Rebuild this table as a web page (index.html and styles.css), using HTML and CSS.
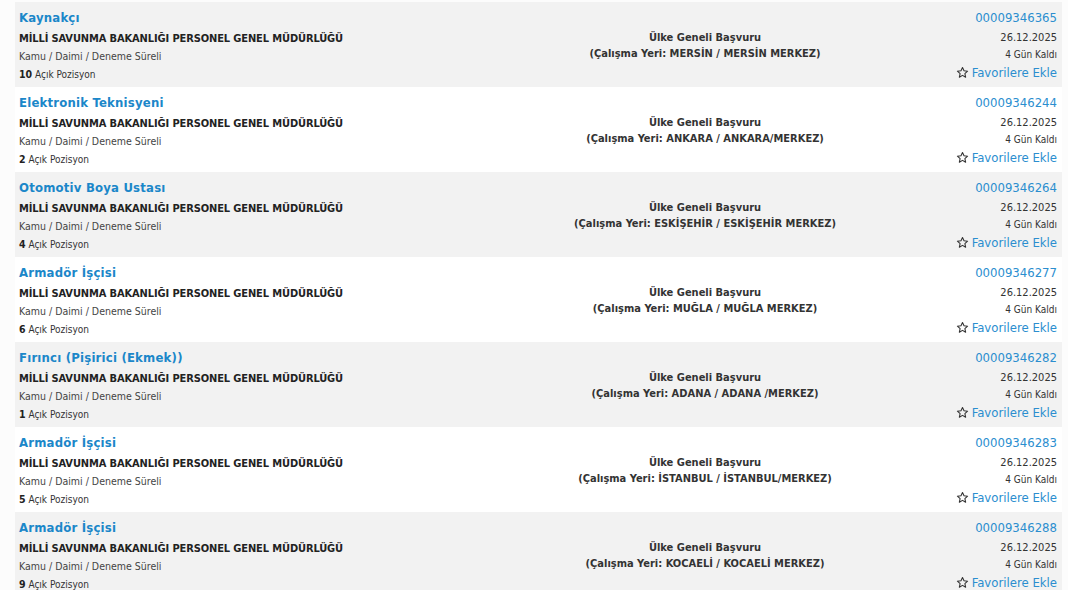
FILE: index.html
```html
<!DOCTYPE html>
<html lang="tr">
<head>
<meta charset="utf-8">
<link rel="stylesheet" href="styles.css">
</head>
<body>
<div class="list">
  <div class="row alt">
    <div class="col-left">
      <a class="title">Kaynakçı</a>
      <div class="org">MİLLİ SAVUNMA BAKANLIĞI PERSONEL GENEL MÜDÜRLÜĞÜ</div>
      <div class="type">Kamu / Daimi / Deneme Süreli</div>
      <div class="pos"><b>10</b> Açık Pozisyon</div>
    </div>
    <div class="col-mid">
      <div>Ülke Geneli Başvuru</div>
      <div>(Çalışma Yeri: MERSİN / MERSİN MERKEZ)</div>
    </div>
    <div class="col-right">
      <a class="num">00009346365</a>
      <div class="date">26.12.2025</div>
      <div class="left">4 Gün Kaldı</div>
      <a class="fav"><svg class="star" viewBox="0 0 24 24"><path d="M12 2.8l2.8 6.1 6.6.7-5 4.5 1.4 6.6L12 17.3l-5.8 3.4 1.4-6.6-5-4.5 6.6-.7z"/></svg>Favorilere Ekle</a>
    </div>
  </div>
  <div class="row">
    <div class="col-left">
      <a class="title">Elektronik Teknisyeni</a>
      <div class="org">MİLLİ SAVUNMA BAKANLIĞI PERSONEL GENEL MÜDÜRLÜĞÜ</div>
      <div class="type">Kamu / Daimi / Deneme Süreli</div>
      <div class="pos"><b>2</b> Açık Pozisyon</div>
    </div>
    <div class="col-mid">
      <div>Ülke Geneli Başvuru</div>
      <div>(Çalışma Yeri: ANKARA / ANKARA/MERKEZ)</div>
    </div>
    <div class="col-right">
      <a class="num">00009346244</a>
      <div class="date">26.12.2025</div>
      <div class="left">4 Gün Kaldı</div>
      <a class="fav"><svg class="star" viewBox="0 0 24 24"><path d="M12 2.8l2.8 6.1 6.6.7-5 4.5 1.4 6.6L12 17.3l-5.8 3.4 1.4-6.6-5-4.5 6.6-.7z"/></svg>Favorilere Ekle</a>
    </div>
  </div>
  <div class="row alt">
    <div class="col-left">
      <a class="title">Otomotiv Boya Ustası</a>
      <div class="org">MİLLİ SAVUNMA BAKANLIĞI PERSONEL GENEL MÜDÜRLÜĞÜ</div>
      <div class="type">Kamu / Daimi / Deneme Süreli</div>
      <div class="pos"><b>4</b> Açık Pozisyon</div>
    </div>
    <div class="col-mid">
      <div>Ülke Geneli Başvuru</div>
      <div>(Çalışma Yeri: ESKİŞEHİR / ESKİŞEHİR MERKEZ)</div>
    </div>
    <div class="col-right">
      <a class="num">00009346264</a>
      <div class="date">26.12.2025</div>
      <div class="left">4 Gün Kaldı</div>
      <a class="fav"><svg class="star" viewBox="0 0 24 24"><path d="M12 2.8l2.8 6.1 6.6.7-5 4.5 1.4 6.6L12 17.3l-5.8 3.4 1.4-6.6-5-4.5 6.6-.7z"/></svg>Favorilere Ekle</a>
    </div>
  </div>
  <div class="row">
    <div class="col-left">
      <a class="title">Armadör İşçisi</a>
      <div class="org">MİLLİ SAVUNMA BAKANLIĞI PERSONEL GENEL MÜDÜRLÜĞÜ</div>
      <div class="type">Kamu / Daimi / Deneme Süreli</div>
      <div class="pos"><b>6</b> Açık Pozisyon</div>
    </div>
    <div class="col-mid">
      <div>Ülke Geneli Başvuru</div>
      <div>(Çalışma Yeri: MUĞLA / MUĞLA MERKEZ)</div>
    </div>
    <div class="col-right">
      <a class="num">00009346277</a>
      <div class="date">26.12.2025</div>
      <div class="left">4 Gün Kaldı</div>
      <a class="fav"><svg class="star" viewBox="0 0 24 24"><path d="M12 2.8l2.8 6.1 6.6.7-5 4.5 1.4 6.6L12 17.3l-5.8 3.4 1.4-6.6-5-4.5 6.6-.7z"/></svg>Favorilere Ekle</a>
    </div>
  </div>
  <div class="row alt">
    <div class="col-left">
      <a class="title">Fırıncı (Pişirici (Ekmek))</a>
      <div class="org">MİLLİ SAVUNMA BAKANLIĞI PERSONEL GENEL MÜDÜRLÜĞÜ</div>
      <div class="type">Kamu / Daimi / Deneme Süreli</div>
      <div class="pos"><b>1</b> Açık Pozisyon</div>
    </div>
    <div class="col-mid">
      <div>Ülke Geneli Başvuru</div>
      <div>(Çalışma Yeri: ADANA / ADANA /MERKEZ)</div>
    </div>
    <div class="col-right">
      <a class="num">00009346282</a>
      <div class="date">26.12.2025</div>
      <div class="left">4 Gün Kaldı</div>
      <a class="fav"><svg class="star" viewBox="0 0 24 24"><path d="M12 2.8l2.8 6.1 6.6.7-5 4.5 1.4 6.6L12 17.3l-5.8 3.4 1.4-6.6-5-4.5 6.6-.7z"/></svg>Favorilere Ekle</a>
    </div>
  </div>
  <div class="row">
    <div class="col-left">
      <a class="title">Armadör İşçisi</a>
      <div class="org">MİLLİ SAVUNMA BAKANLIĞI PERSONEL GENEL MÜDÜRLÜĞÜ</div>
      <div class="type">Kamu / Daimi / Deneme Süreli</div>
      <div class="pos"><b>5</b> Açık Pozisyon</div>
    </div>
    <div class="col-mid">
      <div>Ülke Geneli Başvuru</div>
      <div>(Çalışma Yeri: İSTANBUL / İSTANBUL/MERKEZ)</div>
    </div>
    <div class="col-right">
      <a class="num">00009346283</a>
      <div class="date">26.12.2025</div>
      <div class="left">4 Gün Kaldı</div>
      <a class="fav"><svg class="star" viewBox="0 0 24 24"><path d="M12 2.8l2.8 6.1 6.6.7-5 4.5 1.4 6.6L12 17.3l-5.8 3.4 1.4-6.6-5-4.5 6.6-.7z"/></svg>Favorilere Ekle</a>
    </div>
  </div>
  <div class="row alt">
    <div class="col-left">
      <a class="title">Armadör İşçisi</a>
      <div class="org">MİLLİ SAVUNMA BAKANLIĞI PERSONEL GENEL MÜDÜRLÜĞÜ</div>
      <div class="type">Kamu / Daimi / Deneme Süreli</div>
      <div class="pos"><b>9</b> Açık Pozisyon</div>
    </div>
    <div class="col-mid">
      <div>Ülke Geneli Başvuru</div>
      <div>(Çalışma Yeri: KOCAELİ / KOCAELİ MERKEZ)</div>
    </div>
    <div class="col-right">
      <a class="num">00009346288</a>
      <div class="date">26.12.2025</div>
      <div class="left">4 Gün Kaldı</div>
      <a class="fav"><svg class="star" viewBox="0 0 24 24"><path d="M12 2.8l2.8 6.1 6.6.7-5 4.5 1.4 6.6L12 17.3l-5.8 3.4 1.4-6.6-5-4.5 6.6-.7z"/></svg>Favorilere Ekle</a>
    </div>
  </div>
</div>
</body>
</html>
```

FILE: styles.css
```css
html, body {
  margin: 0;
  padding: 0;
  background: #fcfcfc;
}
body {
  font-family: "DejaVu Sans Condensed", "DejaVu Sans", sans-serif;
  color: #222;
  overflow: hidden;
}
.list {
  padding: 2px 6px 0 15px;
}
.row {
  display: grid;
  grid-template-columns: 540px 300px 1fr;
  height: 85px;
  box-sizing: border-box;
  background: #ffffff;
}
.row.alt {
  background: #f2f2f2;
}
.col-left {
  padding: 7px 0 0 4px;
  display: flex;
  flex-direction: column;
}
.title {
  font-size: 13px;
  font-weight: bold;
  color: #1b87c9;
  line-height: 18px;
  margin-bottom: 3px;
  letter-spacing: 0.2px;
}
.org {
  font-size: 11px;
  font-weight: bold;
  color: #222;
  line-height: 17px;
  letter-spacing: -0.12px;
}
.type {
  font-size: 10.5px;
  color: #444;
  line-height: 18px;
}
.pos {
  font-size: 10px;
  color: #333;
  line-height: 18px;
}
.pos b {
  font-size: 10.5px;
  color: #222;
}
.col-mid {
  padding-top: 28px;
  text-align: center;
  font-size: 11px;
  font-weight: bold;
  color: #333;
  line-height: 16px;
}
.col-right {
  padding: 7px 5px 0 0;
  display: flex;
  flex-direction: column;
  align-items: flex-end;
}
.num {
  font-size: 13px;
  color: #2b8ecf;
  line-height: 18px;
  margin-bottom: 2px;
}
.date {
  font-size: 11px;
  color: #333;
  line-height: 17px;
}
.left {
  font-size: 10px;
  color: #333;
  line-height: 18px;
}
.fav {
  font-size: 13px;
  color: #2b8ecf;
  line-height: 17px;
  display: flex;
  align-items: center;
  gap: 3px;
}
.star {
  width: 13px;
  height: 13px;
  fill: none;
  stroke: #333;
  stroke-width: 2;
  stroke-linejoin: round;
}
```
